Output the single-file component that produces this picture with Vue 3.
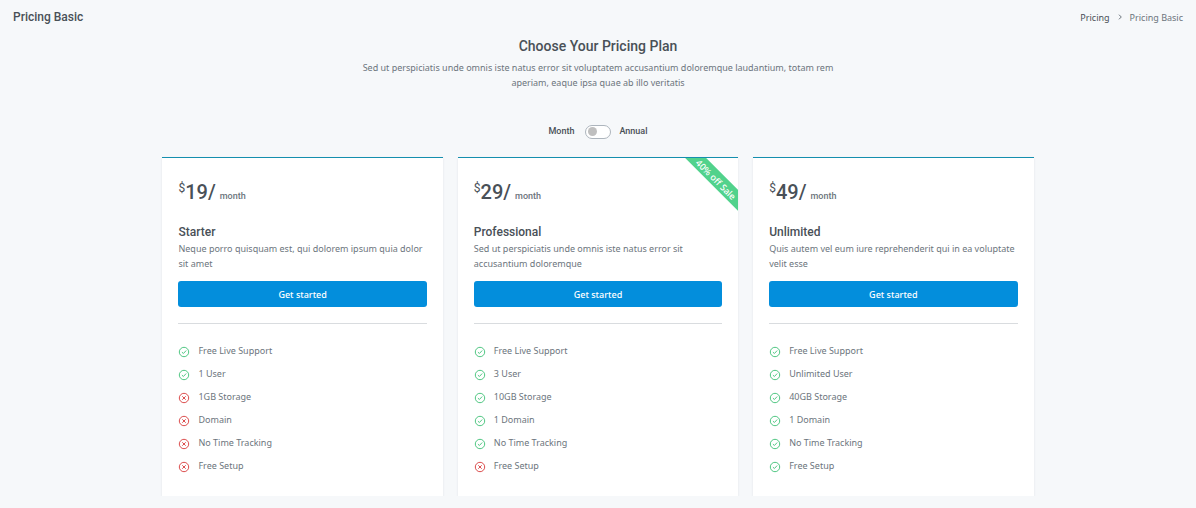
<script setup>
import { ref } from 'vue'

const annual = ref(false)

const plans = [
  {
    name: 'Starter',
    price: 19,
    text: 'Neque porro quisquam est, qui dolorem ipsum quia dolor sit amet',
    features: [
      ['Free Live Support', true],
      ['1 User', true],
      ['1GB Storage', false],
      ['Domain', false],
      ['No Time Tracking', false],
      ['Free Setup', false],
    ],
  },
  {
    name: 'Professional',
    price: 29,
    ribbon: '40% off Sale',
    text: 'Sed ut perspiciatis unde omnis iste natus error sit accusantium doloremque',
    features: [
      ['Free Live Support', true],
      ['3 User', true],
      ['10GB Storage', true],
      ['1 Domain', true],
      ['No Time Tracking', true],
      ['Free Setup', false],
    ],
  },
  {
    name: 'Unlimited',
    price: 49,
    text: 'Quis autem vel eum iure reprehenderit qui in ea voluptate velit esse',
    features: [
      ['Free Live Support', true],
      ['Unlimited User', true],
      ['40GB Storage', true],
      ['1 Domain', true],
      ['No Time Tracking', true],
      ['Free Setup', true],
    ],
  },
]
</script>

<template>
  <div class="page">
    <header class="topbar">
      <h1>Pricing Basic</h1>
      <nav class="crumbs" aria-label="Breadcrumb">
        <a href="#">Pricing</a>
        <svg viewBox="0 0 6 8" aria-hidden="true"><path d="M2 1.7 4.3 4 2 6.3" /></svg>
        <span>Pricing Basic</span>
      </nav>
    </header>

    <main>
      <section class="intro">
        <h2>Choose Your Pricing Plan</h2>
        <p>
          Sed ut perspiciatis unde omnis iste natus error sit voluptatem accusantium doloremque
          laudantium, totam rem aperiam, eaque ipsa quae ab illo veritatis
        </p>
      </section>

      <div class="billing">
        <label for="billing">Month</label>
        <input id="billing" v-model="annual" type="checkbox" role="switch" />
        <label for="billing">Annual</label>
      </div>

      <section class="plans">
        <article v-for="plan in plans" :key="plan.name" class="card">
          <div v-if="plan.ribbon" class="ribbon"><span>{{ plan.ribbon }}</span></div>
          <div class="price">
            <span class="currency">$</span><span class="amount">{{ plan.price }}/</span>
            <span class="period">month</span>
          </div>
          <h3>{{ plan.name }}</h3>
          <p>{{ plan.text }}</p>
          <button type="button">Get started</button>
          <hr />
          <ul>
            <li v-for="[label, included] in plan.features" :key="label">
              <svg v-if="included" class="yes" viewBox="0 0 12 12" aria-hidden="true">
                <circle cx="6" cy="6" r="4.7" />
                <path d="M3.9 6.1 5.4 7.5 8.2 4.5" />
              </svg>
              <svg v-else class="no" viewBox="0 0 12 12" aria-hidden="true">
                <circle cx="6" cy="6" r="4.7" />
                <path d="M4.3 4.3 7.7 7.7M7.7 4.3 4.3 7.7" />
              </svg>
              <span>{{ label }}</span>
            </li>
          </ul>
        </article>
      </section>
    </main>
  </div>
</template>

<style>
body {
  background: #f6f8fa;
}
</style>

<style scoped>
.page {
  font-family: 'Noto Sans', sans-serif;
  font-size: 9px;
  line-height: 15px;
  color: #6c757d;
}
h1,
h2,
h3,
p,
ul {
  margin: 0;
  padding: 0;
}
h1,
h2,
h3,
.price,
.billing {
  font-family: Roboto, sans-serif;
  font-weight: 500;
  color: #495057;
}
.topbar {
  display: flex;
  justify-content: space-between;
  align-items: center;
  padding: 8px 13px;
}
h1 {
  font-size: 12px;
  line-height: 18px;
}
.crumbs {
  display: flex;
  align-items: center;
  gap: 7px;
}
.crumbs a {
  color: #495057;
  text-decoration: none;
}
.crumbs svg {
  width: 6px;
  height: 8px;
  fill: none;
  stroke: #6c757d;
}
main {
  box-sizing: border-box;
  width: 73%;
  margin: 0 auto;
  padding: 0 1px;
}
.intro {
  max-width: 484px;
  margin: 0 auto;
  text-align: center;
}
h2 {
  font-size: 14px;
  line-height: 20px;
  padding: 2px 0 4px;
}
.billing {
  display: flex;
  justify-content: center;
  align-items: center;
  gap: 8px;
  margin-top: 34px;
  font-size: 9px;
}
.billing input {
  appearance: none;
  display: flex;
  align-items: center;
  width: 26px;
  height: 14px;
  margin: 0 0 0 3px;
  padding: 0 2px;
  box-sizing: border-box;
  border: 1px solid #adb5bd;
  border-radius: 7px;
  background: #fff;
}
.billing input::before {
  content: '';
  width: 9px;
  height: 9px;
  border-radius: 50%;
  background: #bfbfbf;
}
.billing input:checked {
  justify-content: flex-end;
}
.plans {
  display: grid;
  grid-template-columns: repeat(3, 1fr);
  gap: 15px;
  margin-top: 18px;
}
.card {
  position: relative;
  padding: 20px 16px 23px;
  border-top: 1px solid #158fae;
  background: #fff;
  box-shadow: 0 1px 2px #dfe3e8;
}
.ribbon {
  position: absolute;
  top: 0;
  right: 0;
  width: 53px;
  height: 53px;
}
.ribbon::before {
  content: '';
  position: absolute;
  inset: 0;
  background: #51d28c;
  clip-path: polygon(0 0, 21px 0, 100% 32px, 100% 100%);
}
.ribbon span {
  position: absolute;
  top: 14px;
  right: -5px;
  width: 54px;
  line-height: 15px;
  text-align: center;
  white-space: nowrap;
  font-weight: 500;
  color: #fff;
  transform: rotate(45deg);
}
.price {
  display: flex;
  align-items: baseline;
  line-height: 28px;
}
.currency {
  align-self: flex-start;
  font-size: 12px;
  font-weight: 400;
  line-height: 20px;
}
.amount {
  font-size: 20px;
}
.period {
  margin-left: 4px;
  font-size: 9px;
  color: #6c757d;
}
h3 {
  margin-top: 13px;
  font-size: 12px;
  line-height: 18px;
}
button {
  display: block;
  width: 100%;
  height: 26px;
  margin-top: 10px;
  border: 0;
  border-radius: 3px;
  font: inherit;
  font-weight: 500;
  color: #fff;
  background: #038edc;
}
hr {
  margin: 16px 0 0;
  border: 0;
  border-top: 1px solid #d9dcdf;
}
ul {
  display: grid;
  gap: 8px;
  margin-top: 19px;
  list-style: none;
}
li {
  display: flex;
  align-items: flex-start;
  gap: 8px;
}
li svg {
  width: 12px;
  height: 12px;
  margin-top: 3px;
  fill: none;
}
.yes {
  stroke: #51c783;
}
.no {
  stroke: #dc4e4e;
}
</style>
